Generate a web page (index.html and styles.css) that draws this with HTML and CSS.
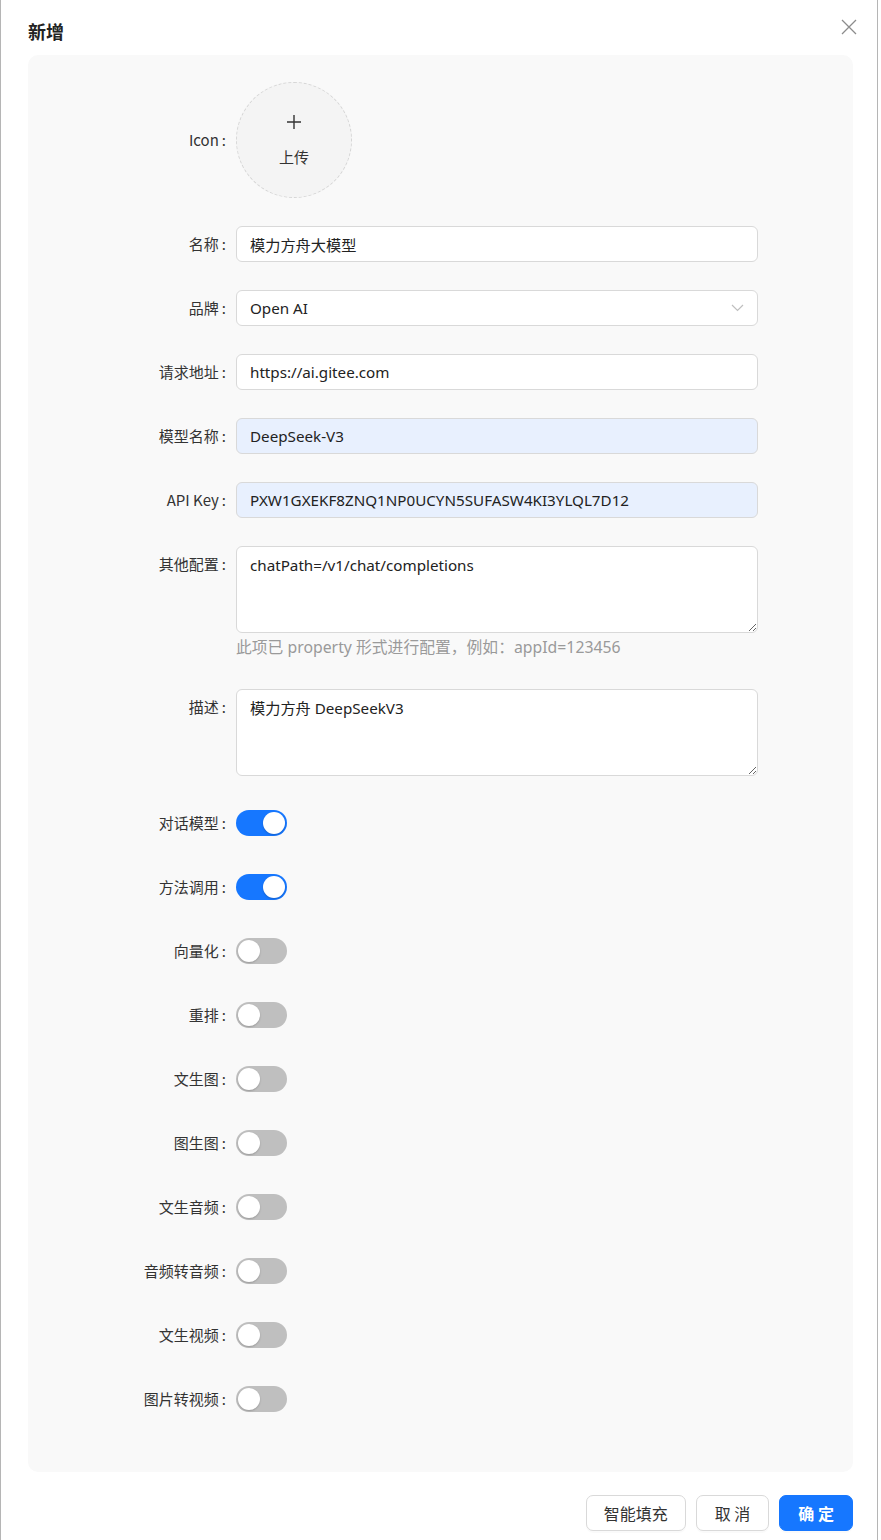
FILE: index.html
```html
<!DOCTYPE html>
<html lang="zh">
<head>
<meta charset="utf-8">
<title>新增</title>
<link rel="stylesheet" href="styles.css">
</head>
<body>
<div class="modal">
  <div class="modal-header">
    <div class="modal-title">新增</div>
    <button class="modal-close" aria-label="close">
      <svg width="16" height="16" viewBox="0 0 16 16"><path d="M1 1L15 15M15 1L1 15" stroke="#8c8c8c" stroke-width="1.3" fill="none"/></svg>
    </button>
  </div>
  <div class="panel">
    <div class="row row-icon">
      <label class="label">Icon<span class="colon">:</span></label>
      <div class="upload">
        <svg width="16" height="16" viewBox="0 0 16 16"><path d="M8 1V15M1 8H15" stroke="#333" stroke-width="1.4" fill="none"/></svg>
        <span class="upload-text">上传</span>
      </div>
    </div>
    <div class="row">
      <label class="label">名称<span class="colon">:</span></label>
      <input class="input" value="模力方舟大模型">
    </div>
    <div class="row">
      <label class="label">品牌<span class="colon">:</span></label>
      <div class="input select">
        <span>Open AI</span>
        <svg width="13" height="8" viewBox="0 0 13 8"><path d="M1 1L6.5 6.5L12 1" stroke="#bfbfbf" stroke-width="1.2" fill="none"/></svg>
      </div>
    </div>
    <div class="row">
      <label class="label">请求地址<span class="colon">:</span></label>
      <input class="input" value="https://ai.gitee.com">
    </div>
    <div class="row">
      <label class="label">模型名称<span class="colon">:</span></label>
      <input class="input autofill" value="DeepSeek-V3">
    </div>
    <div class="row">
      <label class="label">API Key<span class="colon">:</span></label>
      <input class="input autofill" value="PXW1GXEKF8ZNQ1NP0UCYN5SUFASW4KI3YLQL7D12">
    </div>
    <div class="row row-top row-extra">
      <label class="label">其他配置<span class="colon">:</span></label>
      <div class="field">
        <textarea class="textarea">chatPath=/v1/chat/completions</textarea>
        <div class="help">此项已 property 形式进行配置，例如：appId=123456</div>
      </div>
    </div>
    <div class="row row-top row-desc">
      <label class="label">描述<span class="colon">:</span></label>
      <textarea class="textarea">模力方舟 DeepSeekV3</textarea>
    </div>
    <div class="row"><label class="label">对话模型<span class="colon">:</span></label><span class="switch on"><i></i></span></div>
    <div class="row"><label class="label">方法调用<span class="colon">:</span></label><span class="switch on"><i></i></span></div>
    <div class="row"><label class="label">向量化<span class="colon">:</span></label><span class="switch"><i></i></span></div>
    <div class="row"><label class="label">重排<span class="colon">:</span></label><span class="switch"><i></i></span></div>
    <div class="row"><label class="label">文生图<span class="colon">:</span></label><span class="switch"><i></i></span></div>
    <div class="row"><label class="label">图生图<span class="colon">:</span></label><span class="switch"><i></i></span></div>
    <div class="row"><label class="label">文生音频<span class="colon">:</span></label><span class="switch"><i></i></span></div>
    <div class="row"><label class="label">音频转音频<span class="colon">:</span></label><span class="switch"><i></i></span></div>
    <div class="row"><label class="label">文生视频<span class="colon">:</span></label><span class="switch"><i></i></span></div>
    <div class="row"><label class="label">图片转视频<span class="colon">:</span></label><span class="switch"><i></i></span></div>
  </div>
  <div class="footer">
    <button class="btn btn-wide">智能填充</button>
    <button class="btn">取 消</button>
    <button class="btn primary">确 定</button>
  </div>
</div>
</body>
</html>
```

FILE: styles.css
```css
* { box-sizing: border-box; }
html, body { margin: 0; padding: 0; background: #fff; }
body {
  font-family: "Noto Sans", "Noto Sans CJK SC", sans-serif;
  color: #333;
  font-size: 14px;
}
.modal {
  width: 878px;
  height: 1540px;
  border-left: 1px solid #b5b5b5;
  border-right: 1px solid #b5b5b5;
  padding: 0 24px 0 27px;
  display: flex;
  flex-direction: column;
}
.modal-header {
  height: 55px;
  display: flex;
  justify-content: space-between;
  align-items: flex-start;
}
.modal-title {
  font-family: "Noto Sans CJK SC", sans-serif;
  font-weight: 700;
  font-size: 18px;
  color: #222;
  margin-top: 18px;
  line-height: 26px;
}
.modal-close {
  border: 0;
  background: none;
  padding: 0;
  margin-top: 19px;
  margin-right: -4px;
  width: 16px;
  height: 16px;
  display: flex;
}
.panel {
  background: #f9f9f9;
  border-radius: 10px;
  padding: 27px 0 55px;
  display: flex;
  flex-direction: column;
  gap: 28px;
}
.row {
  display: flex;
  align-items: center;
  gap: 10px;
  min-height: 36px;
}
.row-top { align-items: flex-start; }
.row-extra { margin-bottom: 3px; }
.row-desc { margin-bottom: 1px; }
.label {
  width: 198px;
  text-align: right;
  font-family: "Noto Sans CJK SC", sans-serif;
  font-size: 15px;
  color: #333;
  line-height: 36px;
  flex: none;
}
.colon {
  margin-left: 3px;
}
.upload {
  width: 116px;
  height: 116px;
  border-radius: 50%;
  border: 1px dashed #d6d6d6;
  background: #f4f4f4;
  display: flex;
  flex-direction: column;
  align-items: center;
  justify-content: center;
  gap: 17px;
  padding-bottom: 0;
}
.upload-text {
  font-family: "Noto Sans CJK SC", sans-serif;
  font-size: 15px;
  color: #333;
  line-height: 20px;
}
.input {
  width: 522px;
  height: 36px;
  border: 1px solid #d9d9d9;
  border-radius: 6px;
  background: #fff;
  padding: 0 13px;
  font-family: "Noto Sans", "Noto Sans CJK SC", sans-serif;
  font-size: 15.2px;
  color: #222;
  outline: none;
}
.autofill { background: #e8f0fe; }
.select {
  display: flex;
  align-items: center;
  justify-content: space-between;
  padding-right: 13px;
}
.field { display: flex; flex-direction: column; }
.textarea {
  display: block;
  width: 522px;
  height: 87px;
  border: 1px solid #d9d9d9;
  border-radius: 6px;
  background: #fff;
  padding: 6px 13px;
  font-family: "Noto Sans", "Noto Sans CJK SC", sans-serif;
  font-size: 15.2px;
  line-height: 24px;
  color: #222;
  outline: none;
  resize: vertical;
  margin: 0;
}
.help {
  margin-top: 3px;
  font-family: "Noto Sans", "Noto Sans CJK SC", sans-serif;
  font-size: 15.8px;
  line-height: 22px;
  color: #9a9a9a;
}
.switch {
  position: relative;
  width: 51px;
  height: 26px;
  border-radius: 13px;
  background: #bfbfbf;
  flex: none;
}
.switch i {
  position: absolute;
  top: 2px;
  left: 2px;
  width: 22px;
  height: 22px;
  border-radius: 50%;
  background: #fff;
  box-shadow: 0 1px 2px rgba(0,0,0,0.2);
}
.switch.on { background: #1677ff; }
.switch.on i { left: 27px; }
.footer {
  display: flex;
  justify-content: flex-end;
  gap: 10px;
  margin-top: 23px;
}
.btn {
  height: 36px;
  padding: 0 18px;
  border: 1px solid #d9d9d9;
  border-radius: 7px;
  background: #fff;
  font-family: "Noto Sans CJK SC", sans-serif;
  font-size: 16px;
  color: #333;
  box-shadow: 0 2px 0 rgba(0,0,0,0.02);
}
.btn-wide { padding: 0 17px; }
.btn.primary {
  background: #1677ff;
  border-color: #1677ff;
  color: #fff;
  font-weight: 700;
}
```
